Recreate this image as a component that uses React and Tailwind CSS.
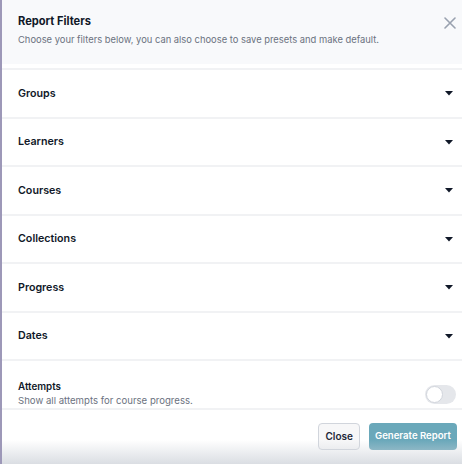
import { useState } from 'react'

const filters = ['Groups', 'Learners', 'Courses', 'Collections', 'Progress', 'Dates']

function Caret() {
  return (
    <svg width="8" height="5" viewBox="0 0 8 5" className="text-gray-900">
      <path d="M0 0 H8 L4 4.6 Z" fill="currentColor" />
    </svg>
  )
}

export default function App() {
  const [attempts, setAttempts] = useState(false)

  return (
    <div className="relative w-[462px] h-[464px] overflow-hidden bg-white border-l-2 border-[#9d98b8] text-gray-900" style={{ fontFamily: 'Inter, "Noto Sans", sans-serif' }}>
      {/* Header */}
      <div className="h-16 bg-[#f8f9fb] pl-4 pr-[6px] pt-[13px] flex justify-between">
        <div>
          <div className="text-[11.1px] font-bold leading-4">Report Filters</div>
          <div className="mt-[3px] text-[9.4px] leading-4 text-[#6b7280]">Choose your filters below, you can also choose to save presets and make default.</div>
        </div>
        <button className="h-4 mt-[2px] text-gray-400">
          <svg width="12" height="12" viewBox="0 0 12 12" fill="none" stroke="currentColor" strokeWidth="1.6" strokeLinecap="round">
            <path d="M1 1 L11 11 M11 1 L1 11" />
          </svg>
        </button>
      </div>

      {/* Filters */}
      <div className="mt-1">
        {filters.map(f => (
          <div key={f} className="h-[48.5px] border-t-2 border-[#f1f2f4] pl-4 pr-[9px] pt-[1px] flex items-center justify-between cursor-pointer">
            <span className="text-[10.7px] font-semibold">{f}</span>
            <Caret />
          </div>
        ))}
      </div>

      {/* Attempts */}
      <div className="h-[49px] border-t-2 border-[#f1f2f4] pl-4 pr-[6px] pt-[19px] flex justify-between">
        <div>
          <div className="text-[9.8px] font-semibold leading-[14px]">Attempts</div>
          <div className="text-[9.6px] leading-[14px] text-[#6b7280]">Show all attempts for course progress.</div>
        </div>
        <button onClick={() => setAttempts(!attempts)}
          className={`mt-[5px] w-[31px] h-[19px] rounded-full flex items-center px-[1px] ${attempts ? 'bg-[#6aa8ba] justify-end' : 'bg-gray-200 justify-start'}`}>
          <span className="w-[17px] h-[17px] rounded-full bg-white border border-gray-300" />
        </button>
      </div>

      {/* Footer */}
      <div className="border-t-2 border-[#f1f2f4] flex justify-end gap-[9px] pr-[5px] pt-[13px]">
        <button className="h-[27px] px-[6px] rounded-[4px] border border-gray-300 bg-[#f7f7f8] text-[10px] font-semibold text-gray-800">Close</button>
        <button className="h-[27px] px-[6px] rounded-[4px] bg-[#6aa8ba] text-[9.6px] font-semibold text-white">Generate Report</button>
      </div>

      <div className="absolute left-0 right-0 bottom-0 h-6 bg-gradient-to-b from-white/0 to-gray-300/80 pointer-events-none" />
    </div>
  )
}
